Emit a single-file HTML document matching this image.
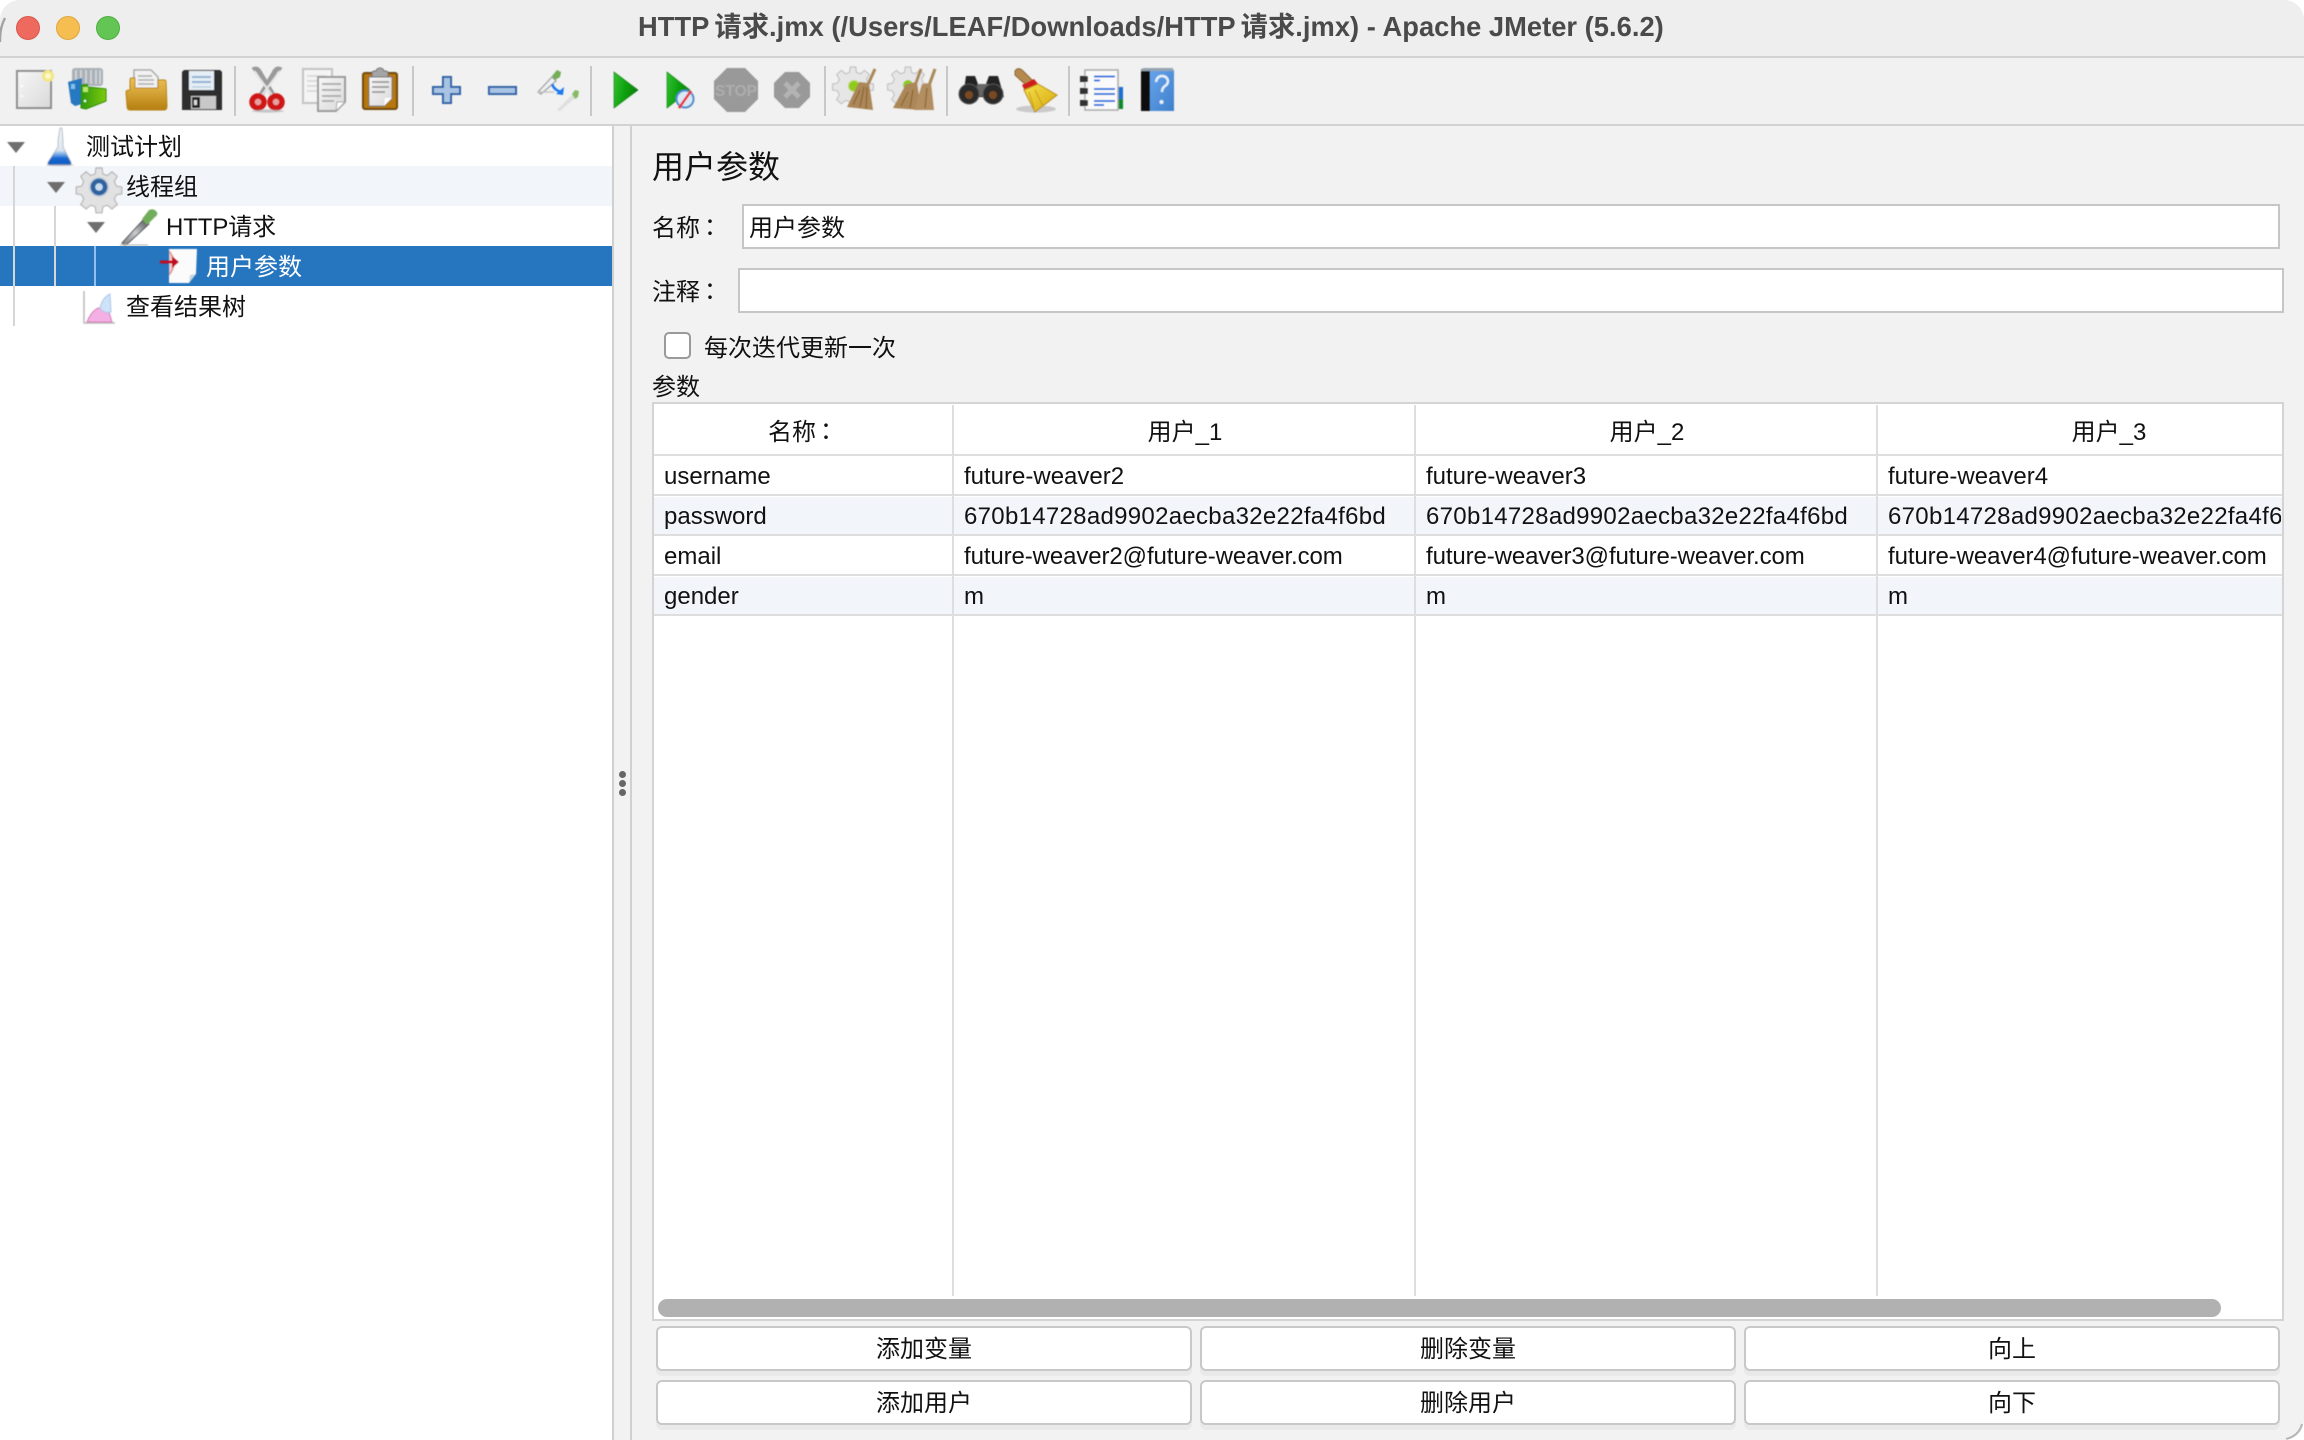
<!DOCTYPE html>
<html lang="zh"><head><meta charset="utf-8"><title>HTTP请求.jmx - Apache JMeter (5.6.2)</title>
<style>
html,body{margin:0;padding:0;width:2304px;height:1440px;overflow:hidden;background:#fff}
body{font-family:"Liberation Sans","Noto Sans CJK SC",sans-serif;color:#111;font-size:24px}
#w{position:absolute;left:0;top:0;width:2304px;height:1440px;background:#f2f2f2;border-radius:20px;overflow:hidden}
.a{position:absolute}
.t{position:absolute;white-space:nowrap;line-height:40px;height:40px}
.c{text-align:center}
.col{font-family:"Noto Sans CJK TC",sans-serif;line-height:0;position:relative;left:-2px}
.inp{position:absolute;background:#fff;border:2px solid #c6c6c6;box-sizing:border-box}
.btn{position:absolute;width:536px;height:45px;box-sizing:border-box;background:#fff;border:2px solid #c8c8c8;border-radius:6px;text-align:center;line-height:43px;box-shadow:0 5px 0 #e9e9e9}
.hl{position:absolute;left:654px;width:1628px;height:2px;background:#dedede}
.vl{position:absolute;top:405px;width:2px;height:891px;background:#dedede}
.row{position:absolute;left:654px;width:1628px;height:38px;background:#f2f5fa}
.dot{position:absolute;left:619px;width:7px;height:7px;border-radius:50%;background:#666}
svg{position:absolute;left:0;top:0}
</style></head><body>
<div id="w">
<!-- title bar -->
<div class="a" style="left:0;top:0;width:2304px;height:56px;background:#eeeeee"></div>
<div class="a" style="left:0;top:56px;width:2304px;height:2px;background:#d2d2d2"></div>
<div class="a" style="left:0;top:58px;width:2304px;height:66px;background:#f1f1f1"></div>
<div class="a" style="left:0;top:124px;width:2304px;height:2px;background:#d2d2d2"></div>
<div class="a" style="left:16px;top:16px;width:24px;height:24px;border-radius:50%;background:#ee6a5f;box-sizing:border-box;border:1px solid #d9574d"></div>
<div class="a" style="left:56px;top:16px;width:24px;height:24px;border-radius:50%;background:#f6be50;box-sizing:border-box;border:1px solid #dfa53c"></div>
<div class="a" style="left:96px;top:16px;width:24px;height:24px;border-radius:50%;background:#62c554;box-sizing:border-box;border:1px solid #52ad45"></div>
<div class="t" style="left:638px;top:7px;font-size:27.3px;font-weight:bold;color:#4a4a4a;letter-spacing:.03px">HTTP<span style="margin-left:5px">请求</span>.jmx (/Users/LEAF/Downloads/HTTP<span style="margin-left:5px">请求</span>.jmx) - Apache JMeter (5.6.2)</div>

<!-- tree -->
<div class="a" style="left:0;top:126px;width:612px;height:1314px;background:#fff"></div>
<div class="a" style="left:0;top:166px;width:612px;height:40px;background:#f2f5fa"></div>
<div class="a" style="left:0;top:246px;width:612px;height:40px;background:#2675bf"></div>
<div class="a" style="left:13px;top:166px;width:2px;height:160px;background:#d6d6d6"></div>
<div class="a" style="left:54px;top:206px;width:2px;height:80px;background:#d6d6d6"></div>
<div class="a" style="left:94px;top:246px;width:2px;height:40px;background:#8fc0f0"></div>
<div class="t" style="left:86px;top:128px">测试计划</div>
<div class="t" style="left:126px;top:168px">线程组</div>
<div class="t" style="left:166px;top:208px;letter-spacing:-.1px">HTTP请求</div>
<div class="t" style="left:206px;top:248px;color:#fff">用户参数</div>
<div class="t" style="left:126px;top:288px">查看结果树</div>

<!-- splitter -->
<div class="a" style="left:612px;top:126px;width:2px;height:1314px;background:#d0d0d0"></div>
<div class="a" style="left:630px;top:126px;width:2px;height:1314px;background:#d0d0d0"></div>
<div class="dot" style="top:771px"></div><div class="dot" style="top:780px"></div><div class="dot" style="top:789px"></div>

<!-- right form -->
<div class="t" style="left:652px;top:147px;font-size:32px">用户参数</div>
<div class="t" style="left:652px;top:209px">名称<span class="col" lang="zh-TW">：</span></div>
<div class="inp" style="left:742px;top:204px;width:1538px;height:45px"></div>
<div class="t" style="left:749px;top:209px">用户参数</div>
<div class="t" style="left:652px;top:273px">注释<span class="col" lang="zh-TW">：</span></div>
<div class="inp" style="left:738px;top:268px;width:1546px;height:45px"></div>
<div class="a" style="left:664px;top:332px;width:27px;height:27px;box-sizing:border-box;background:#fff;border:2px solid #9a9a9a;border-radius:5px"></div>
<div class="t" style="left:704px;top:329px">每次迭代更新一次</div>
<div class="t" style="left:652px;top:368px">参数</div>

<!-- table -->
<div class="a" style="left:652px;top:402px;width:1632px;height:919px;box-sizing:border-box;background:#fff;border:2px solid #d4d4d4"></div>
<div class="row" style="top:497px"></div>
<div class="row" style="top:577px"></div>
<div class="hl" style="top:454px"></div><div class="hl" style="top:494px"></div><div class="hl" style="top:534px"></div><div class="hl" style="top:574px"></div><div class="hl" style="top:614px"></div>
<div class="vl" style="left:952px"></div><div class="vl" style="left:1414px"></div><div class="vl" style="left:1876px"></div>
<div class="t c" style="left:655px;width:298px;top:413px">名称<span class="col" lang="zh-TW">：</span></div>
<div class="t c" style="left:955px;width:460px;top:413px">用户_1</div>
<div class="t c" style="left:1417px;width:460px;top:413px">用户_2</div>
<div class="t c" style="left:1879px;width:460px;top:413px">用户_3</div>

<div class="t" style="left:664px;top:457px">username</div>
<div class="t" style="left:964px;top:457px">future-weaver2</div>
<div class="t" style="left:1426px;top:457px">future-weaver3</div>
<div class="t" style="left:1888px;top:457px">future-weaver4</div>

<div class="t" style="left:664px;top:497px">password</div>
<div class="t" style="left:964px;top:497px;letter-spacing:.3px">670b14728ad9902aecba32e22fa4f6bd</div>
<div class="t" style="left:1426px;top:497px;letter-spacing:.3px">670b14728ad9902aecba32e22fa4f6bd</div>
<div class="a" style="left:1888px;top:497px;width:393px;height:38px;overflow:hidden"><div class="t" style="left:0;top:0;letter-spacing:.3px">670b14728ad9902aecba32e22fa4f6bd</div></div>

<div class="t" style="left:664px;top:537px">email</div>
<div class="t" style="left:964px;top:537px;letter-spacing:-.1px">future-weaver2@future-weaver.com</div>
<div class="t" style="left:1426px;top:537px;letter-spacing:-.1px">future-weaver3@future-weaver.com</div>
<div class="t" style="left:1888px;top:537px;letter-spacing:-.1px">future-weaver4@future-weaver.com</div>

<div class="t" style="left:664px;top:577px">gender</div>
<div class="t" style="left:964px;top:577px">m</div>
<div class="t" style="left:1426px;top:577px">m</div>
<div class="t" style="left:1888px;top:577px">m</div>

<div class="a" style="left:658px;top:1299px;width:1563px;height:18px;border-radius:9px;background:#b1b1b1"></div>

<div class="btn" style="left:656px;top:1326px">添加变量</div>
<div class="btn" style="left:1200px;top:1326px">删除变量</div>
<div class="btn" style="left:1744px;top:1326px">向上</div>
<div class="btn" style="left:656px;top:1380px">添加用户</div>
<div class="btn" style="left:1200px;top:1380px">删除用户</div>
<div class="btn" style="left:1744px;top:1380px">向下</div>

<!-- icons -->
<svg width="2304" height="1440" viewBox="0 0 2304 1440" xmlns="http://www.w3.org/2000/svg">
<defs>
<filter id="b" x="-10%" y="-10%" width="120%" height="120%"><feGaussianBlur stdDeviation=".55"/></filter>
<linearGradient id="gp" x1="0" y1="0" x2="1" y2="1"><stop offset="0" stop-color="#f7f7f7"/><stop offset="1" stop-color="#d9d9d9"/></linearGradient>
<linearGradient id="gf" x1="0" y1="0" x2="0" y2="1"><stop offset="0" stop-color="#eec256"/><stop offset="1" stop-color="#b57f10"/></linearGradient>
<linearGradient id="gr" x1="0" y1="0" x2="1" y2=".3"><stop offset="0" stop-color="#35c035"/><stop offset=".6" stop-color="#0aa00a"/><stop offset="1" stop-color="#06800a"/></linearGradient>
<linearGradient id="gg" x1="0" y1="0" x2="1" y2="0"><stop offset="0" stop-color="#2f9a07"/><stop offset="1" stop-color="#7ecb10"/></linearGradient>
<linearGradient id="gh" x1="0" y1="0" x2="1" y2="1"><stop offset="0" stop-color="#66a5ea"/><stop offset="1" stop-color="#3f7fcc"/></linearGradient>
<linearGradient id="gy" x1="0" y1="0" x2="1" y2="1"><stop offset="0" stop-color="#f7df4a"/><stop offset="1" stop-color="#d5a810"/></linearGradient>
<linearGradient id="gl" x1="0" y1="0" x2="0" y2="1"><stop offset="0" stop-color="#eef1f5"/><stop offset=".6" stop-color="#dde6f1"/><stop offset=".72" stop-color="#6fa6e6"/><stop offset=".82" stop-color="#1467d2"/><stop offset="1" stop-color="#0f5bc0"/></linearGradient>
<linearGradient id="gd" x1="0" y1="1" x2="1" y2="0"><stop offset="0" stop-color="#777"/><stop offset=".5" stop-color="#c8ccd0"/><stop offset="1" stop-color="#444"/></linearGradient>
</defs>

<!-- window corners -->
<path d="M0 42C0 32 1 26 5 18" fill="none" stroke="#555" stroke-width="2.4" opacity=".5"/>
<path d="M2302 1424C2300 1432 2294 1437 2286 1439" fill="none" stroke="#777" stroke-width="2" opacity=".5"/>

<g filter="url(#b)">
<!-- New -->
<rect x="17" y="71" width="34" height="37" fill="url(#gp)" stroke="#8d8d8d" stroke-width="2"/>
<circle cx="22" cy="86" r="1.2" fill="#fff"/><circle cx="22" cy="96" r="1.2" fill="#fff"/>
<circle cx="48" cy="76" r="4.5" fill="#fff8c8" stroke="#f2e684" stroke-width="3"/>
<!-- Templates -->
<rect x="72" y="68" width="31" height="18" rx="3" fill="#a9b1b6"/>
<path d="M76 70v14M81 70v14M86 70v14M91 70v14M96 70v14M100 70v14" stroke="#d8dcdf" stroke-width="1.5"/>
<path d="M68 82l14-4v26l-7 2-4-3z" fill="#2578c0"/>
<rect x="71" y="84" width="4" height="5" fill="#7fc0ee"/>
<path d="M81 85l6-1 1 3 18 2 0 12-20 8-5-1z" fill="url(#gg)" stroke="#2c8a06" stroke-width="1"/>
<rect x="83" y="87" width="5" height="5" fill="#b8e870"/>
<circle cx="85" cy="101" r="1.2" fill="#fff"/>
<!-- Open -->
<path d="M134 92V70h17l7 7v15z" fill="#f2f2f2" stroke="#aaa" stroke-width="1.5"/>
<path d="M138 76h14M138 80h16M138 84h16" stroke="#aaa" stroke-width="1.6"/>
<path d="M130 80q0-2 2-2h3v10h23v-8h6q2 0 2 2l1 24q0 4-3 4h-34q-3 0-3-4l-1-14q0-2 4-2z" fill="url(#gf)" stroke="#b58215" stroke-width="1"/>
<!-- Save -->
<path d="M182 72l2-2h36l2 2v38h-40z" fill="#2f2f2f"/>
<rect x="189" y="71" width="25" height="19" fill="#e5edf5"/>
<path d="M192 77h19M192 82h19" stroke="#8fb1d5" stroke-width="2"/><path d="M192 87h19" stroke="#a9c2dd" stroke-width="1"/>
<rect x="191" y="96" width="25" height="13" fill="#c8c8c8"/>
<rect x="192" y="97" width="8" height="11" fill="#222"/><rect x="194" y="100" width="3" height="5" fill="#ddd"/>
<!-- Cut -->
<path d="M253 70c3-2 5-1 7 3l13 22M281 70c-3-2-5-1-7 3l-13 22" fill="none" stroke="#9a9a9a" stroke-width="5"/>
<path d="M254 71l18 24M280 71l-18 24" fill="none" stroke="#e4e4e4" stroke-width="2"/>
<circle cx="258" cy="102" r="6" fill="#e8a0a0" stroke="#cf1515" stroke-width="5.5"/>
<circle cx="276" cy="102" r="6" fill="#e8a0a0" stroke="#cf1515" stroke-width="5.5"/>
<ellipse cx="268" cy="111" rx="16" ry="1.6" fill="#aaa" opacity=".6"/>
<!-- Copy -->
<rect x="303" y="69" width="29" height="34" fill="#f4f4f4" stroke="#c2c2c2" stroke-width="2"/>
<path d="M307 76h20M307 81h20M307 86h20M307 91h10" stroke="#d4d4d4" stroke-width="1.6"/>
<path d="M318 77h27v25l-9 9h-18z" fill="url(#gp)" stroke="#9a9a9a" stroke-width="2"/>
<path d="M322 84h19M322 90h19M322 96h19M322 101h12" stroke="#a8a8a8" stroke-width="1.8"/>
<path d="M336 111l1-9h8z" fill="#fff" stroke="#a5a5a5" stroke-width="1"/>
<!-- Paste -->
<rect x="363" y="73" width="34" height="36" rx="2" fill="#b6770f" stroke="#6f4a10" stroke-width="2"/>
<path d="M369 77h23v21l-8 8h-15z" fill="url(#gp)" stroke="#777" stroke-width="1"/>
<path d="M372 82h17M372 87h17M372 92h13" stroke="#999" stroke-width="1.8"/>
<path d="M384 106l1-8h7z" fill="#fff"/>
<path d="M372 77v-4q0-2 3-2h1q1-3 4-3t4 3h1q3 0 3 2v4z" fill="#a5a5a5" stroke="#6e6e6e" stroke-width="1"/>
<!-- Plus -->
<path d="M443 77h8v10h9v7h-9v9h-8v-9h-10v-7h10z" fill="#a9c3e4" stroke="#2f62a6" stroke-width="2"/>
<!-- Minus -->
<rect x="489" y="87" width="27" height="7" fill="#a9c3e4" stroke="#2f62a6" stroke-width="2"/>
<!-- Tool -->
<path d="M538 92l14-15 4 4-15 13z" fill="#eef0f2" stroke="#9a9a9a" stroke-width="1.2"/>
<path d="M552 76l5-6 4 2-1 5-5 3z" fill="#74ad58"/>
<path d="M538 92h16" stroke="#c4c4c4" stroke-width="1.5"/>
<path d="M552 84q2 6 9 8" fill="none" stroke="#1d78ee" stroke-width="2.6"/><path d="M564 87l-1 8-7-1z" fill="#1d78ee"/>
<path d="M557 110l15-15 3 3-15 13z" fill="#d8d8d8" opacity=".75"/>
<path d="M572 94l3-4 4 1-1 6-3 2z" fill="#86bb66"/>
<!-- Run -->
<path d="M614 72l24 18-24 18z" fill="url(#gr)" stroke="#0a7a0a" stroke-width=".6"/>
<!-- Run no timers -->
<path d="M667 72l23 18-23 18z" fill="url(#gr)" stroke="#0a7a0a" stroke-width=".6"/>
<circle cx="685" cy="99" r="8.500" fill="#d8e8f8" stroke="#4d8ccc" stroke-width="2"/>
<path d="M679 108l12-17" stroke="#ee2b2b" stroke-width="2.4"/>
<!-- Stop -->
<path d="M727 68h18l13 13v18l-13 13h-18l-13-13V81z" fill="#999"/>
<text x="736" y="96" text-anchor="middle" font-family="Liberation Sans" font-weight="bold" font-size="15.500" fill="#adadad">STOP</text>
<!-- Shutdown -->
<path d="M785 72h14l11 11v14l-11 11h-14l-11-11V83z" fill="#999"/>
<path d="M785 83l14 14M799 83l-14 14" stroke="#b3b3b3" stroke-width="5"/>
<!-- Clear -->
<g transform="translate(853 84) scale(.68)"><path d="M-4-25h8l1 8 6 2 6-5 7 6-4 7 3 6 7 1v9l-7 1-3 6 4 7-7 6-6-5-6 2-1 8h-8l-1-8-6-2-6 5-7-6 4-7-3-6-7-1v-9l7-1 3-6-4-7 7-6 6 5 6-2z" fill="#e6e6e6" stroke="#bcbcbc" stroke-width="1.500"/></g>
<circle cx="854" cy="86" r="5.500" fill="#8fca1e" stroke="#bcdc6c" stroke-width="1"/>
<path d="M875 69l-10 22" stroke="#a98858" stroke-width="3"/>
<path d="M859 82l10 1 4 27-26-3z" fill="#ac8758"/>
<path d="M853 105l7-15M860 107l4-20M866 109l1-22" stroke="#8a6636" stroke-width="1.200"/>
<!-- Clear all -->
<g transform="translate(908 84) scale(.68)"><path d="M-4-25h8l1 8 6 2 6-5 7 6-4 7 3 6 7 1v9l-7 1-3 6 4 7-7 6-6-5-6 2-1 8h-8l-1-8-6-2-6 5-7-6 4-7-3-6-7-1v-9l7-1 3-6-4-7 7-6 6 5 6-2z" fill="#e6e6e6" stroke="#bcbcbc" stroke-width="1.500"/></g>
<circle cx="908" cy="85" r="5" fill="#8fca1e"/>
<path d="M921 69l-8 22M935 69l-8 22" stroke="#a98858" stroke-width="3"/>
<path d="M906 84l11-2 4 28-28-2z" fill="#ac8758"/>
<path d="M922 84l9-1 3 27-20 0z" fill="#b28e60"/>
<path d="M901 106l7-14M910 108l3-18M925 108l2-20" stroke="#8a6636" stroke-width="1.200"/>
<!-- Binoculars -->
<path d="M966 76h9l3 8h8l3-8h9l4 14 2 7h-42l2-7z" fill="#222"/>
<rect x="977" y="84" width="12" height="12" fill="#666"/>
<circle cx="969" cy="94" r="10" fill="#2a2a2a" stroke="#555" stroke-width="1"/><circle cx="969" cy="95" r="4" fill="#7a4a20"/>
<circle cx="993" cy="94" r="10" fill="#2a2a2a" stroke="#555" stroke-width="1"/><circle cx="993" cy="95" r="4" fill="#7a4a20"/>
<!-- Broom -->
<ellipse cx="1036" cy="109" rx="20" ry="3.500" fill="#aaa" opacity=".55"/>
<path d="M1015 71q3-4 7-1l10 10-6 5-11-10z" fill="#b68a50" stroke="#8a642e" stroke-width="1"/>
<path d="M1022 85l12-6 4 5-13 7z" fill="#d01b1b"/>
<path d="M1024 90l14-6 19 11-22 17z" fill="url(#gy)" stroke="#b58e14" stroke-width="1"/>
<path d="M1029 92l5 16M1035 90l8 16" stroke="#c79e14" stroke-width="1"/>
<!-- Log -->
<rect x="1118" y="87" width="5" height="12" fill="#1d70d0"/><rect x="1118" y="99" width="5" height="10" fill="#0e8a2a"/>
<rect x="1085" y="70" width="33" height="40" fill="#fafafa" stroke="#aaa" stroke-width="1.500"/>
<path d="M1094 76.500h21M1094 80.500h6M1094 89h21M1094 94h21M1094 101h21M1094 105h10" stroke="#1f74e0" stroke-width="2"/>
<g fill="#333"><rect x="1080" y="76" width="8" height="6"/><rect x="1080" y="88" width="8" height="6"/><rect x="1080" y="100" width="8" height="6"/></g>
<!-- Help -->
<rect x="1141" y="69" width="9" height="42" fill="#111"/>
<path d="M1150 70h24v41h-24z" fill="url(#gh)"/>
<path d="M1141 70q1-2 3-2h29v3h-32z" fill="#96a4b2"/>
<path d="M1156 82q1-6 6-6t6 5q0 3-3 5t-3 6" fill="none" stroke="#e6f0fc" stroke-width="2.400"/>
<circle cx="1161.500" cy="102" r="2" fill="#e6f0fc"/>

<!-- tree triangles -->
<path d="M7 142h18l-9 11z" fill="#6e6e6e"/>
<path d="M47 182h18l-9 11z" fill="#6e6e6e"/>
<path d="M87 222h18l-9 11z" fill="#6e6e6e"/>

<!-- flask -->
<path d="M58 140l2-12h2l1 12v7l8 15q1 3-2 3H50q-3 0-2-3l10-15z" fill="url(#gl)" stroke="#b0b8c2" stroke-width=".8"/>
<ellipse cx="60" cy="165" rx="14" ry="1" fill="#99a" opacity=".6"/>
<!-- gear -->
<g transform="translate(99 187) scale(.76)">
<path d="M-4-25h8l1 8 6 2 6-5 7 6-4 7 3 6 7 1v9l-7 1-3 6 4 7-7 6-6-5-6 2-1 8h-8l-1-8-6-2-6 5-7-6 4-7-3-6-7-1v-9l7-1 3-6-4-7 7-6 6 5 6-2z" fill="#e2e2e2" stroke="#b4b4b4" stroke-width="1.500"/>
<circle r="12" fill="#2f639f" stroke="#bccadb" stroke-width="2"/>
<circle r="5" fill="#c9dbef"/>
</g>
<!-- dropper -->
<path d="M122 243l22-24 5 5-24 22z" fill="url(#gd)" stroke="#555" stroke-width="1"/>
<path d="M142 219l7-9q4-2 7 1t-1 6l-8 8z" fill="#72ad5c"/>
<path d="M120 245h28" stroke="#c4c4c4" stroke-width="1.400"/>
<!-- params -->
<path d="M169 249h28l-1 25-7 9h-20z" fill="#fbfbfb"/>
<path d="M189 283l1-8 6-1z" fill="#c8d4de"/>
<path d="M169 251q10 12 0 24" fill="#f3c8c8" stroke="#e09090" stroke-width="1.500"/>
<path d="M160 262h13" stroke="#c01020" stroke-width="3"/><path d="M172 256l7 6-7 6z" fill="#c01020"/>
<!-- graph -->
<path d="M84 291v32h31" fill="none" stroke="#bbb" stroke-width="1.500"/>
<path d="M87 322q3-8 8-12t7 0q3 3 7 2l3 10z" fill="#f4b0e4" stroke="#d77ab8" stroke-width="1"/>
<path d="M100 308q2-10 10-14l1 18q-7 2-11-4z" fill="#cfe2f8" stroke="#a9c8ec" stroke-width="1"/>
</g>

<!-- separators -->
<g fill="#c8c8c8">
<rect x="234" y="66" width="2" height="50"/><rect x="412" y="66" width="2" height="50"/><rect x="590" y="66" width="2" height="50"/>
<rect x="824" y="66" width="2" height="50"/><rect x="946" y="66" width="2" height="50"/><rect x="1068" y="66" width="2" height="50"/>
</g>
</svg>
</div>
</body></html>
